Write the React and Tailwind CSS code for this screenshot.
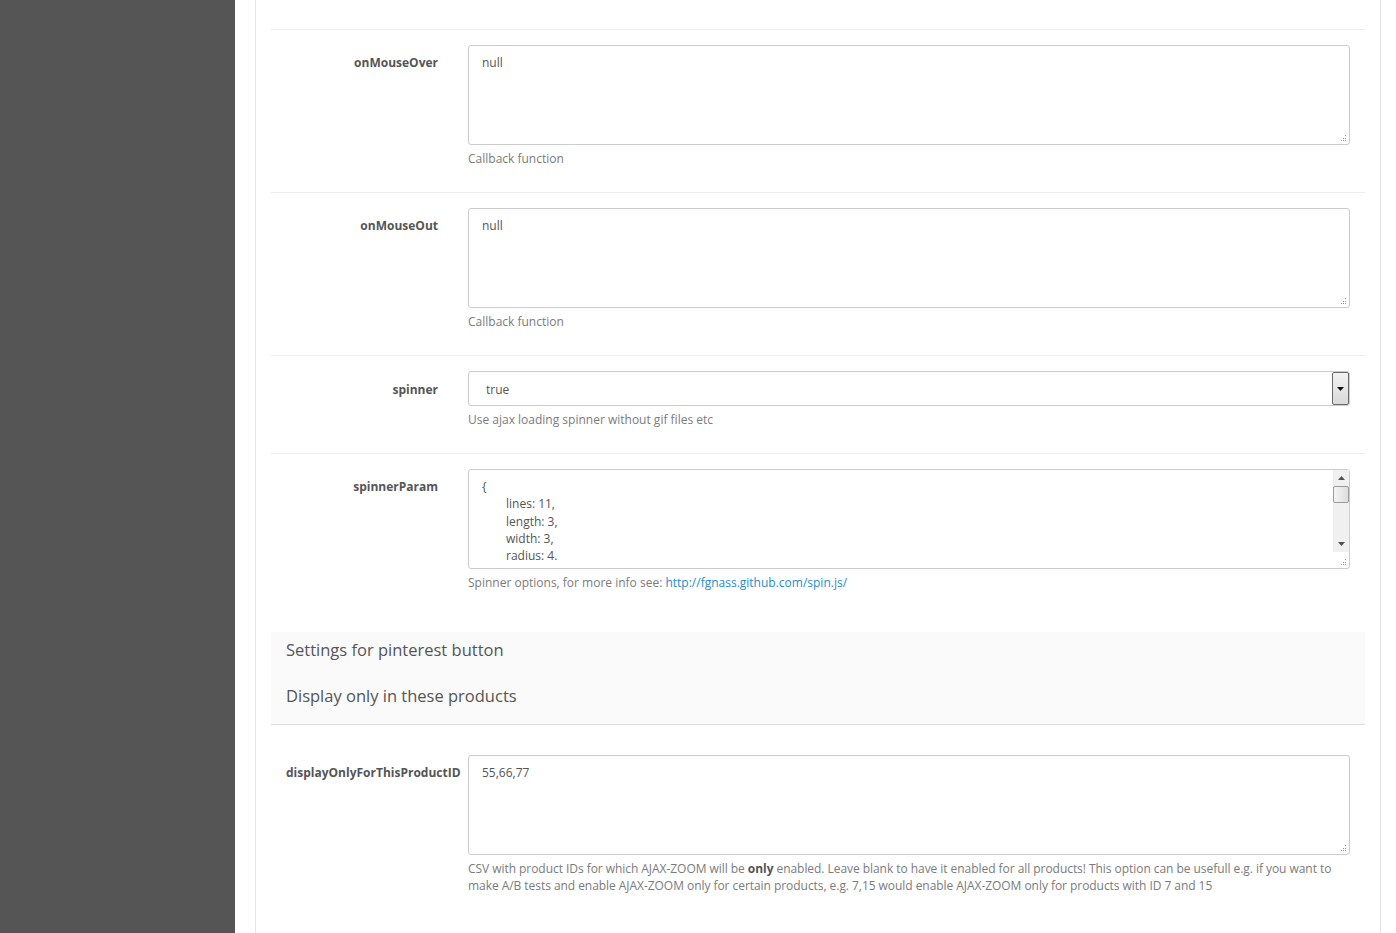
import React from "react";

const FONT = { fontFamily: '"Open Sans", "Liberation Sans", sans-serif' };

function Grip() {
  return (
    <svg
      width="7"
      height="7"
      viewBox="0 0 7 7"
      className="absolute right-[2px] bottom-[2px]"
    >
      <rect x="5" y="0" width="1" height="1" fill="#9a9a9a" />
      <rect x="3" y="3" width="1" height="1" fill="#9a9a9a" />
      <rect x="5" y="3" width="1" height="1" fill="#9a9a9a" />
      <rect x="1" y="5" width="1" height="1" fill="#9a9a9a" />
      <rect x="3" y="5" width="1" height="1" fill="#9a9a9a" />
      <rect x="5" y="5" width="1" height="1" fill="#9a9a9a" />
    </svg>
  );
}

function TextBox({ value }) {
  return (
    <div className="relative h-[100px] rounded-[3px] border border-[#cccccc] bg-white">
      <textarea
        readOnly
        value={value}
        className="block h-full w-full resize-none overflow-hidden bg-transparent px-[13px] pt-[8px] text-[12px] leading-[17px] text-[#555] outline-none"
        style={FONT}
      />
      <Grip />
    </div>
  );
}

function ScrollBox() {
  const lines = ["lines: 11,", "length: 3,", "width: 3,", "radius: 4."];
  return (
    <div className="relative flex h-[100px] rounded-[3px] border border-[#cccccc] bg-white">
      <div className="flex-1 overflow-hidden px-[13px] pt-[8px] text-[12px] leading-[17.3px] text-[#555]">
        <div>{"{"}</div>
        {lines.map((l) => (
          <div key={l} className="pl-[24px]">
            {l}
          </div>
        ))}
      </div>
      <div className="flex w-[16px] flex-col">
        <div className="flex h-[82px] flex-col bg-[#f0f0f0]">
          <div className="flex h-[16px] items-center justify-center">
            <svg width="7" height="4" viewBox="0 0 7 4">
              <path d="M3.5 0 L7 4 L0 4 Z" fill="#505050" />
            </svg>
          </div>
          <div className="h-[17px] rounded-[2px] border border-[#9a9a9a] bg-gradient-to-r from-[#f4f4f4] to-[#dedede]" />
          <div className="flex-1" />
          <div className="flex h-[16px] items-center justify-center">
            <svg width="7" height="4" viewBox="0 0 7 4">
              <path d="M0 0 L7 0 L3.5 4 Z" fill="#505050" />
            </svg>
          </div>
        </div>
      </div>
      <Grip />
    </div>
  );
}

function SelectBox({ value }) {
  return (
    <div className="flex h-[35px] rounded-[3px] border border-[#cccccc] bg-white">
      <div className="flex flex-1 items-center pl-[17px] pt-[2px] text-[12px] text-[#555]">
        {value}
      </div>
      <div className="flex w-[17px] items-center justify-center rounded-[2px] border border-[#6a6a6a] bg-gradient-to-b from-[#f3f3f3] to-[#d9d9d9]">
        <svg width="7" height="4" viewBox="0 0 7 4">
          <path d="M0 0 L7 0 L3.5 4 Z" fill="#111" />
        </svg>
      </div>
    </div>
  );
}

function Row({ label, help, children, last, labelPad = "pt-[9px]" }) {
  return (
    <div
      className={
        "flex pt-[15px] " +
        (last ? "pb-[40px]" : "border-b border-[#eeeeee] pb-[24px]")
      }
    >
      <div
        className={
          "w-[182px] shrink-0 whitespace-nowrap px-[15px] text-right text-[12px] font-bold leading-[18px] text-[#555] " +
          labelPad
        }
      >
        {label}
      </div>
      <div className="flex-1 px-[15px]">
        {children}
        <div className="mt-[5px] text-[12px] leading-[18px] text-[#7b7b7b]">
          {help}
        </div>
      </div>
    </div>
  );
}

export default function App() {
  return (
    <div className="flex h-[933px] overflow-hidden bg-white" style={FONT}>
      <aside className="w-[235px] shrink-0 bg-[#555555]" />
      <main className="flex-1 pl-[20px] pr-[15px]">
        <div className="h-full border-x border-[#e6e6e6] px-[15px] pt-[29px]">
          <div className="border-t border-[#eeeeee]" />
          <Row label="onMouseOver" help="Callback function">
            <TextBox value="null" />
          </Row>
          <Row label="onMouseOut" help="Callback function">
            <TextBox value="null" />
          </Row>
          <Row
            label="spinner"
            labelPad="pt-[10px]"
            help="Use ajax loading spinner without gif files etc"
          >
            <SelectBox value="true" />
          </Row>
          <Row
            label="spinnerParam"
            last
            help={
              <>
                Spinner options, for more info see:{" "}
                <a href="#" className="text-[#268ccd]">
                  http://fgnass.github.com/spin.js/
                </a>
              </>
            }
          >
            <ScrollBox />
          </Row>

          <div className="border-b border-[#dddddd] bg-[#fafafa] px-[15px] pt-[6px] pb-[16px] text-[16.5px] leading-[24px] text-[#555]">
            <div>Settings for pinterest button</div>
            <div className="mt-[22px]">Display only in these products</div>
          </div>

          <div className="flex pt-[30px]">
            <div className="w-[182px] shrink-0 whitespace-nowrap px-[15px] pt-[9px] text-left text-[12px] font-bold leading-[18px] text-[#555]">
              displayOnlyForThisProductID
            </div>
            <div className="flex-1 px-[15px]">
              <TextBox value="55,66,77" />
              <div className="mt-[5px] text-[12px] leading-[17px] tracking-[-0.05px] text-[#7b7b7b]">
                CSV with product IDs for which AJAX-ZOOM will be{" "}
                <b className="text-[#555]">only</b> enabled. Leave blank to
                have it enabled for all products! This option can be usefull
                e.g. if you want to make A/B tests and enable AJAX-ZOOM only for
                certain products, e.g. 7,15 would enable AJAX-ZOOM only for
                products with ID 7 and 15
              </div>
            </div>
          </div>
        </div>
      </main>
    </div>
  );
}
